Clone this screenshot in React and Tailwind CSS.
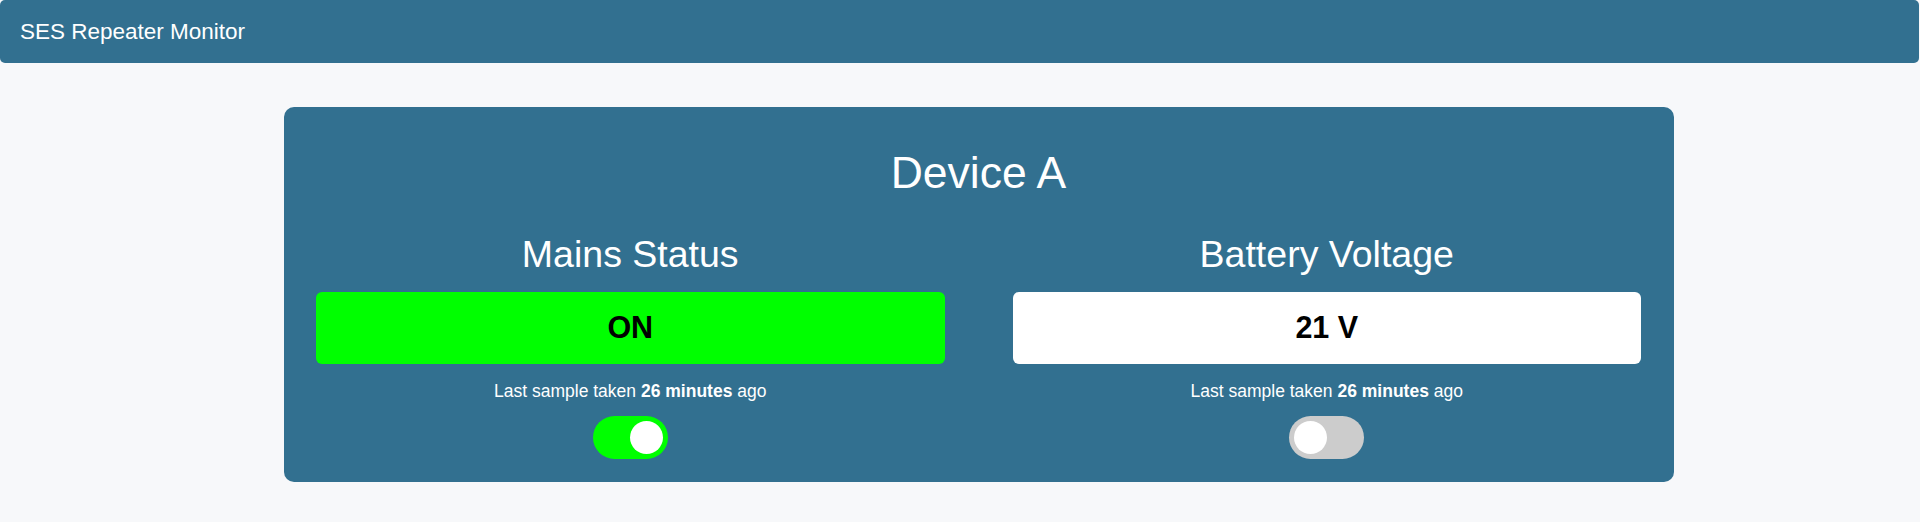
import { useState } from "react";

function Toggle({ on }) {
    return (
        <div
            className={
                on
                    ? "flex justify-end w-[75px] h-[43px] p-[5px] rounded-full bg-[#00ff00]"
                    : "flex justify-start w-[75px] h-[43px] p-[5px] rounded-full bg-[#cccccc]"
            }
        >
            <div className="w-[33px] h-[33px] rounded-full bg-white"></div>
        </div>
    );
}

function Reading({ title, value, ok, enabled }) {
    return (
        <div className="flex flex-col items-center">
            <h2 className="text-[37.5px] leading-[43px] text-white">{title}</h2>

            <div
                className={
                    ok
                        ? "mt-[16px] w-full h-[72px] rounded-[6px] bg-[#00ff00] flex items-center justify-center"
                        : "mt-[16px] w-full h-[72px] rounded-[6px] bg-white flex items-center justify-center"
                }
            >
                <span className="text-[30.5px] font-bold text-black">{value}</span>
            </div>

            <p className="mt-[17px] text-[17.5px] leading-[21px] text-white">
                Last sample taken <b className="font-bold">26 minutes</b> ago
            </p>

            <div className="mt-[14px]">
                <Toggle on={enabled} />
            </div>
        </div>
    );
}

export default function App() {
    const [device] = useState({
        name: "Device A",
        mains: "ON",
        voltage: "21 V",
    });

    return (
        <div className="min-h-[522px] bg-[#f7f8fa] font-['Liberation_Sans',Arial,sans-serif]">

            {/* Header */}
            <div className="h-[63px] mr-px rounded-[5px] bg-[#327090] flex items-center pl-[20px]">
                <span className="text-[22.5px] text-white">SES Repeater Monitor</span>
            </div>

            {/* Device card */}
            <div className="mt-[44px] ml-[284px] w-[1390px] rounded-[10px] bg-[#327090] pl-[32px] pr-[33px] pt-[40px] pb-[23px]">

                <h1 className="text-center text-[44.5px] leading-[52px] text-white">
                    {device.name}
                </h1>

                <div className="mt-[34px] grid grid-cols-2 gap-[68px]">
                    <Reading title="Mains Status" value={device.mains} ok={true} enabled={true} />
                    <Reading title="Battery Voltage" value={device.voltage} ok={false} enabled={false} />
                </div>

            </div>

        </div>
    );
}
